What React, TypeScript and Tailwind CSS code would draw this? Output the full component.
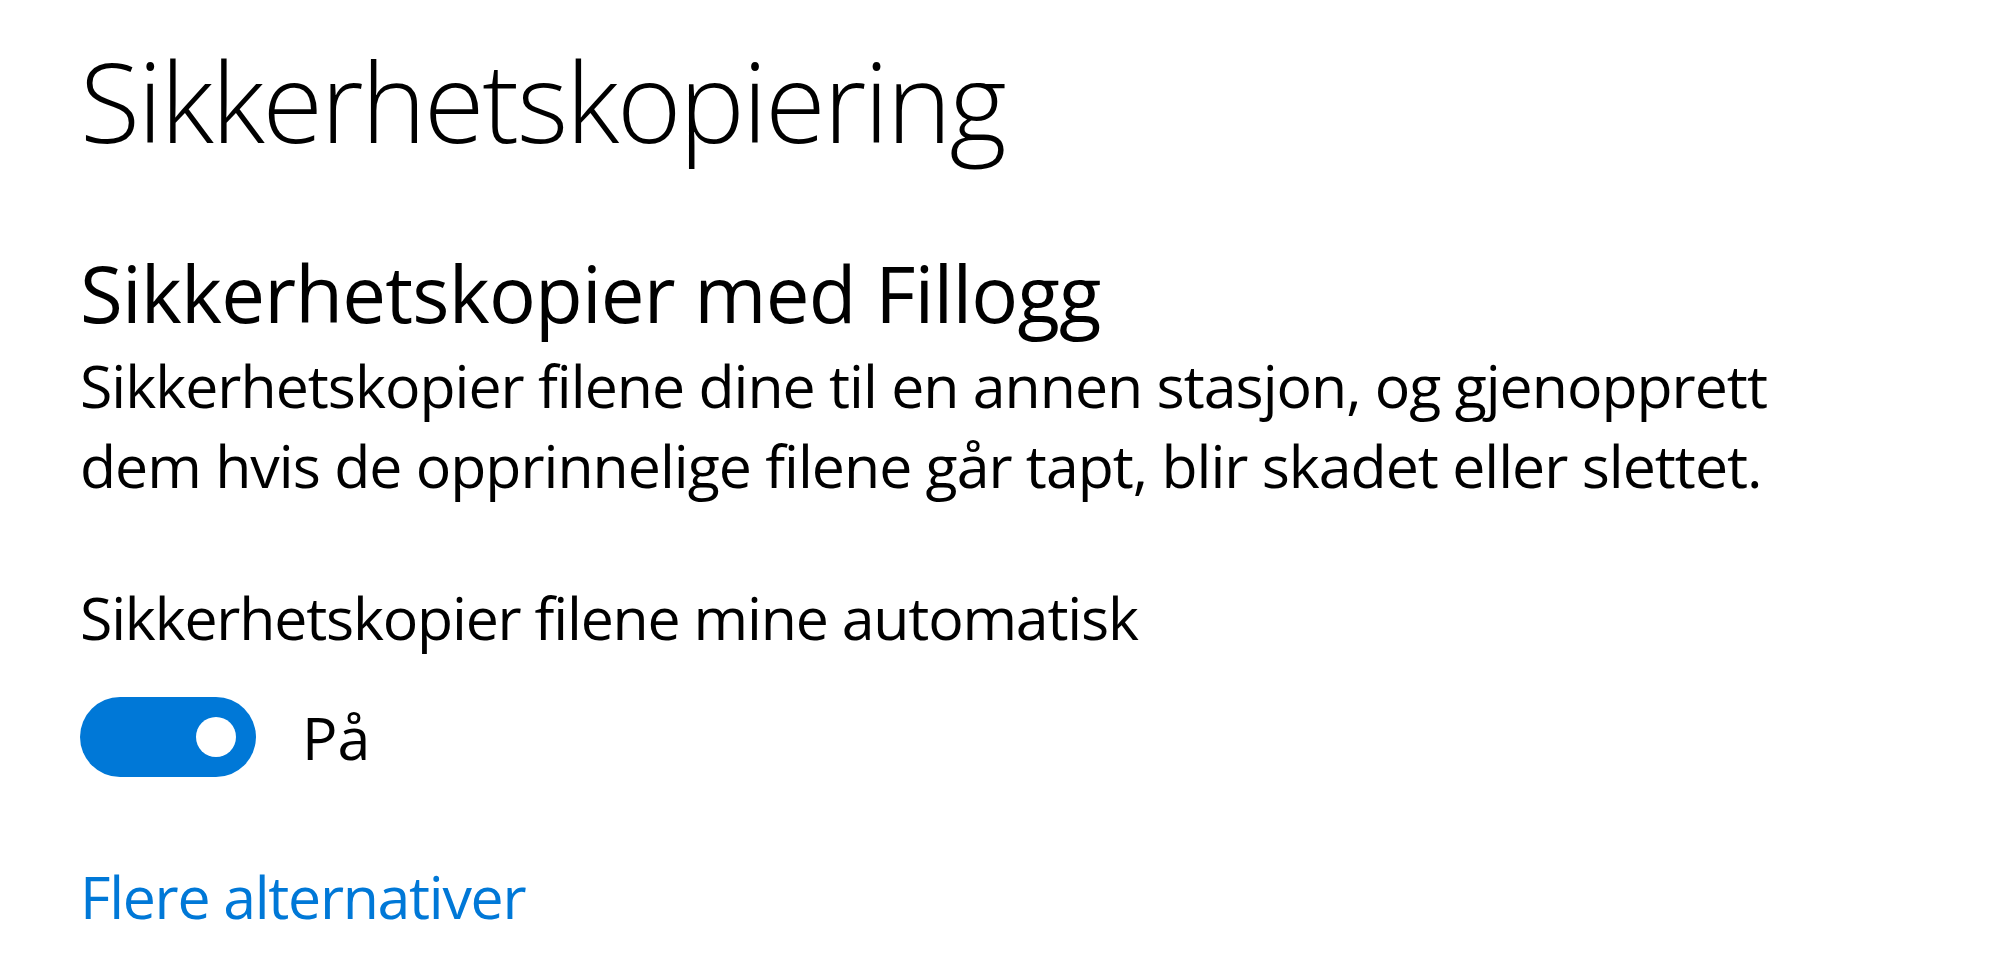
export default function App() {
  return (
    <div className="min-h-[980px] w-full bg-white pl-[80px] pt-[40px] text-black" style={{ fontFamily: '"Open Sans", "Noto Sans", sans-serif' }}>
      <h1 className="text-[110px] leading-[120px] font-light tracking-[-2.2px]">Sikkerhetskopiering</h1>

      <h2 className="mt-[83px] text-[78px] leading-[100px] font-normal tracking-[-0.8px]">Sikkerhetskopier med Fillogg</h2>
      <p className="mt-[2px] w-[1760px] text-[59px] leading-[80px] tracking-[-1px]">
        Sikkerhetskopier filene dine til en annen stasjon, og gjenopprett
        <br />
        dem hvis de opprinnelige filene går tapt, blir skadet eller slettet.
      </p>

      <p className="mt-[72px] text-[59px] leading-[80px] tracking-[-1.2px]">Sikkerhetskopier filene mine automatisk</p>

      <div className="mt-[40px] flex items-center gap-[46px]">
        <button className="flex h-[80px] w-[176px] items-center justify-end rounded-full bg-[#0078d7] pr-[20px]" aria-label="Sikkerhetskopier filene mine automatisk">
          <span className="h-[40px] w-[40px] rounded-full bg-white" />
        </button>
        <span className="text-[59px] leading-[80px]">På</span>
      </div>

      <a href="#" className="mt-[79px] block w-fit text-[59px] leading-[80px] tracking-[-1.3px] text-[#0078d7]">Flere alternativer</a>
    </div>
  );
}
